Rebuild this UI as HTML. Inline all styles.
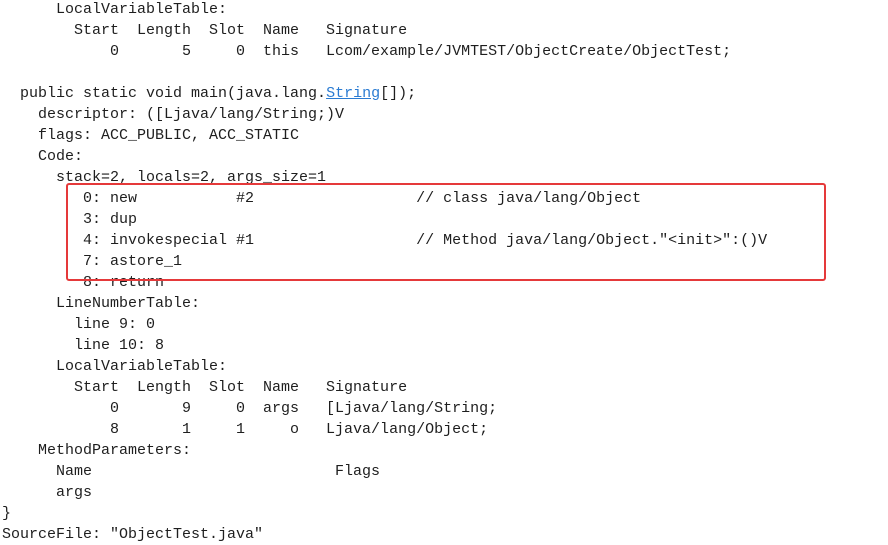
<!DOCTYPE html>
<html><head><style>
html,body{margin:0;padding:0;background:#fff;width:888px;height:544px;overflow:hidden}
pre{position:absolute;left:2px;top:-1px;margin:0;font-family:"Liberation Mono",monospace;font-size:15px;line-height:21px;color:#1e1e1e}
a{color:#2a7bd2;text-decoration:underline}
.box{position:absolute;left:66px;top:183px;width:756px;height:94px;border:2px solid #e5393a;border-radius:3px}
</style></head><body>
<pre>      LocalVariableTable:
        Start  Length  Slot  Name   Signature
            0       5     0  this   Lcom/example/JVMTEST/ObjectCreate/ObjectTest;

  public static void main(java.lang.<a>String</a>[]);
    descriptor: ([Ljava/lang/String;)V
    flags: ACC_PUBLIC, ACC_STATIC
    Code:
      stack=2, locals=2, args_size=1
         0: new           #2                  // class java/lang/Object
         3: dup
         4: invokespecial #1                  // Method java/lang/Object."&lt;init&gt;":()V
         7: astore_1
         8: return
      LineNumberTable:
        line 9: 0
        line 10: 8
      LocalVariableTable:
        Start  Length  Slot  Name   Signature
            0       9     0  args   [Ljava/lang/String;
            8       1     1     o   Ljava/lang/Object;
    MethodParameters:
      Name                           Flags
      args
}
SourceFile: "ObjectTest.java"</pre>
<div class="box"></div>
</body></html>
